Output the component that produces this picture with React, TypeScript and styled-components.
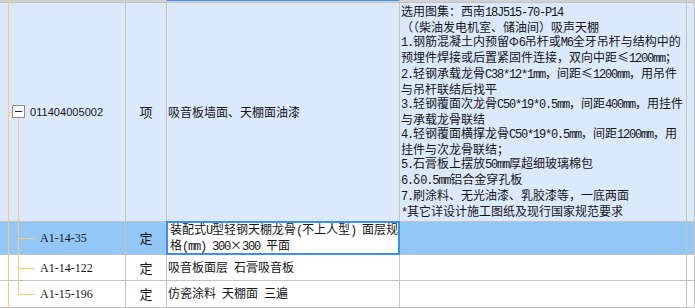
import React from 'react'
import styled, { createGlobalStyle, css } from 'styled-components'

const Grid = '#c3c3c3'
const Tree = '#fcc77e'
const RowBlue = '#dce9fd'
const SelBlue = '#93c8f6'
const Focus = '#3d8fea'
const Ink = '#151515'

const CJK = `"Noto Sans CJK SC", "Noto Sans", sans-serif`

const GlobalStyle = createGlobalStyle`
  html, body {
    margin: 0;
    padding: 0;
    background: #ffffff;
  }
  body {
    font-family: ${CJK};
    color: ${Ink};
    overflow: hidden;
  }
`

const Table = styled.div`
  display: grid;
  grid-template-columns: 126px 41px 233px 287px 1fr;
  grid-template-rows: 3px 219px 33px 26px 27px 10px;
  width: 695px;
  height: 308px;
  overflow: hidden;
`

type Tone = 'blue' | 'selected' | 'white' | 'prev'

const toneBg: Record<Tone, string> = {
  blue: RowBlue,
  selected: SelBlue,
  white: '#ffffff',
  prev: '#d2d2d2',
}

const Cell = styled.div<{ $tone: Tone }>`
  position: relative;
  box-sizing: border-box;
  border-right: 1px solid ${Grid};
  border-bottom: 1px solid ${Grid};
  background: ${(p) => toneBg[p.$tone]};
  display: flex;
  align-items: center;
  font-size: 12px;
  line-height: 14px;
  white-space: nowrap;
  min-width: 0;
`

const PrevCell = styled(Cell)<{ $focus?: boolean }>`
  ${(p) =>
    p.$focus &&
    css`
      background: linear-gradient(${Focus} 0 1px, #d2d2d2 1px);
    `}
`

const KindCell = styled(Cell)`
  justify-content: center;
  font-size: 13px;
`

const NameCell = styled(Cell)`
  padding-left: 1px;
`

const EditCell = styled(Cell)`
  padding: 0 0 0 2px;
  background: #ffffff;
  border: 2px solid ${Focus};
  margin: -1px 0 0 -1px;
  flex-direction: column;
  align-items: flex-start;
  justify-content: center;
  line-height: 13px;
`

const NoteCell = styled(Cell)`
  flex-direction: column;
  align-items: flex-start;
  justify-content: center;
  padding-left: 1px;
`

const Line = styled.span`
  display: block;
  white-space: pre;
`

// half-width runs, 6px a character like the bitmap font of the grid
const Latin = styled.span`
  font-family: "Liberation Mono", "DejaVu Sans Mono", monospace;
  font-size: 12px;
  letter-spacing: -1.2px;
`

function Mixed({ text }: { text: string }) {
  const parts = text.split(/([\x20-\x7e]+)/).filter(Boolean)
  return (
    <Line>
      {parts.map((p, i) =>
        /^[\x20-\x7e]+$/.test(p) ? <Latin key={i}>{p}</Latin> : <span key={i}>{p}</span>,
      )}
    </Line>
  )
}

const Guide = styled.span<{ $x: number; $from?: string; $to?: string }>`
  position: absolute;
  left: ${(p) => p.$x}px;
  width: 1px;
  top: ${(p) => p.$from ?? '-1px'};
  bottom: ${(p) => p.$to ?? '-1px'};
  background: ${Tree};
`

const Stub = styled.span<{ $x: number; $w: number }>`
  position: absolute;
  left: ${(p) => p.$x}px;
  width: ${(p) => p.$w}px;
  top: 50%;
  height: 1px;
  background: ${Tree};
`

const Toggle = styled.span`
  position: absolute;
  left: 12px;
  top: calc(50% - 7px);
  width: 13px;
  height: 13px;
  box-sizing: border-box;
  border: 1px solid #8a8a8a;
  background: #ffffff;
  display: flex;
  align-items: center;
  justify-content: center;

  &::after {
    content: '';
    width: 7px;
    height: 1px;
    background: #222;
  }
`

const ParentCode = styled.span`
  margin-left: 30px;
  font-family: "Liberation Sans", Arial, sans-serif;
  font-size: 11px;
  letter-spacing: 0.05px;
`

const ChildCode = styled.span`
  margin-left: 40px;
  font-family: "Liberation Serif", "Times New Roman", serif;
  font-size: 12px;
`

function TreeCell({
  tone,
  kind,
  code,
}: {
  tone: Tone
  kind: 'parent' | 'child' | 'last'
  code: string
}) {
  return (
    <Cell $tone={tone}>
      <Guide $x={8} />
      {kind === 'parent' && (
        <>
          <Stub $x={8} $w={4} />
          <Guide $x={18} $from="calc(50% + 6px)" />
          <Toggle />
          <ParentCode>{code}</ParentCode>
        </>
      )}
      {kind === 'child' && <Guide $x={18} />}
      {kind === 'last' && <Guide $x={18} $to="50%" />}
      {kind !== 'parent' && (
        <>
          <Stub $x={18} $w={17} />
          <ChildCode>{code}</ChildCode>
        </>
      )}
    </Cell>
  )
}

const notes = [
  '选用图集：西南18J515-70-P14',
  '（（柴油发电机室、储油间）吸声天棚',
  '1.钢筋混凝土内预留Φ6吊杆或M6全牙吊杆与结构中的',
  '预埋件焊接或后置紧固件连接，双向中距≤1200mm；',
  '2.轻钢承载龙骨C38*12*1mm，间距≤1200mm，用吊件',
  '与吊杆联结后找平',
  '3.轻钢覆面次龙骨C50*19*0.5mm，间距400mm，用挂件',
  '与承载龙骨联结',
  '4.轻钢覆面横撑龙骨C50*19*0.5mm，间距1200mm，用',
  '挂件与次龙骨联结；',
  '5.石膏板上摆放50mm厚超细玻璃棉包',
  '6.δ0.5mm铝合金穿孔板',
  '7.刷涂料、无光油漆、乳胶漆等，一底两面',
  '*其它详设计施工图纸及现行国家规范要求',
]

const children = [
  {
    code: 'A1-14-122',
    name: '吸音板面层 石膏吸音板',
  },
  {
    code: 'A1-15-196',
    name: '仿瓷涂料 天棚面 三遍',
  },
]

export default function App() {
  return (
    <>
      <GlobalStyle />
      <Table>
        <Cell $tone="prev">
          <Guide $x={8} />
        </Cell>
        <PrevCell $tone="prev" />
        <PrevCell $tone="prev" $focus />
        <PrevCell $tone="prev" />
        <PrevCell $tone="prev" />

        <TreeCell tone="blue" kind="parent" code="011404005002" />
        <KindCell $tone="blue">项</KindCell>
        <NameCell $tone="blue">
          <Mixed text="吸音板墙面、天棚面油漆" />
        </NameCell>
        <NoteCell $tone="blue">
          {notes.map((n) => (
            <Mixed key={n} text={n} />
          ))}
        </NoteCell>
        <Cell $tone="blue" />

        <TreeCell tone="selected" kind="child" code="A1-14-35" />
        <KindCell $tone="selected">定</KindCell>
        <EditCell $tone="selected">
          <Mixed text="装配式U型轻钢天棚龙骨(不上人型) 面层规" />
          <Mixed text="格(mm) 300×300 平面" />
        </EditCell>
        <Cell $tone="selected" />
        <Cell $tone="selected" />

        {children.map((c, i) => (
          <React.Fragment key={c.code}>
            <TreeCell
              tone="white"
              kind={i === children.length - 1 ? 'last' : 'child'}
              code={c.code}
            />
            <KindCell $tone="white">定</KindCell>
            <NameCell $tone="white">
              <Mixed text={c.name} />
            </NameCell>
            <Cell $tone="white" />
            <Cell $tone="white" />
          </React.Fragment>
        ))}

        <Cell $tone="blue">
          <Guide $x={8} />
        </Cell>
        <Cell $tone="blue" />
        <Cell $tone="blue" />
        <Cell $tone="blue" />
        <Cell $tone="blue" />
      </Table>
    </>
  )
}
